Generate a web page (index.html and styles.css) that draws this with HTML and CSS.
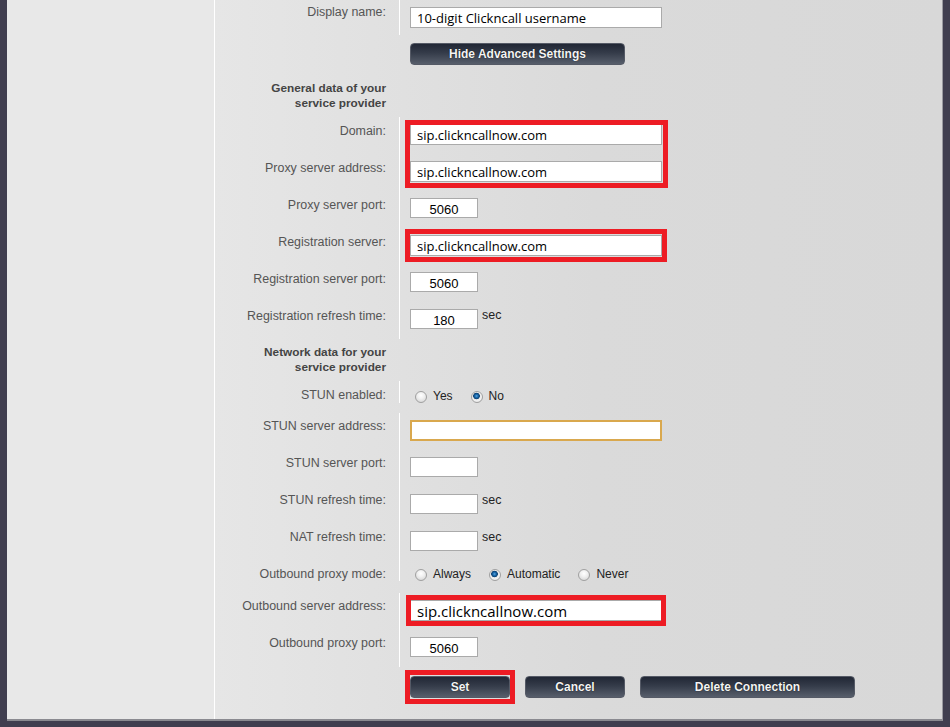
FILE: index.html
```html
<!DOCTYPE html>
<html>
<head>
<meta charset="utf-8">
<title>Advanced Settings</title>
<link rel="stylesheet" href="styles.css">
</head>
<body>
<div class="frame">
  <div class="side"></div>
  <div class="main">
    <div class="sect s1">
      <div class="row r35"><div class="lbl">Display name:</div><div class="fld"><input class="txt wide" value="10-digit Clickncall username"></div></div>
    </div>
    <div class="btnrow"><button class="btn adv">Hide Advanced Settings</button></div>
    <div class="heading">General data of your<br>service provider</div>
    <div class="sect s2">
      <div class="row"><div class="lbl">Domain:</div><div class="fld pair"><input class="txt wide" value="sip.clickncallnow.com"><span class="mark-pair"></span></div></div>
      <div class="row"><div class="lbl">Proxy server address:</div><div class="fld"><input class="txt wide" value="sip.clickncallnow.com"></div></div>
      <div class="row"><div class="lbl">Proxy server port:</div><div class="fld"><input class="txt small" value="5060"></div></div>
      <div class="row"><div class="lbl">Registration server:</div><div class="fld"><span class="mark"><input class="txt wide" value="sip.clickncallnow.com"></span></div></div>
      <div class="row"><div class="lbl">Registration server port:</div><div class="fld"><input class="txt small" value="5060"></div></div>
      <div class="row"><div class="lbl">Registration refresh time:</div><div class="fld"><input class="txt small" value="180"><span class="unit">sec</span></div></div>
    </div>
    <div class="heading h2">Network data for your<br>service provider</div>
    <div class="sect s3">
      <div class="row r32"><div class="lbl lr">STUN enabled:</div><div class="fld radios">
        <label class="opt"><input type="radio" name="stun" class="rad">Yes</label>
        <label class="opt"><input type="radio" name="stun" class="rad" checked>No</label>
      </div></div>
      <div class="row"><div class="lbl">STUN server address:</div><div class="fld"><input class="txt wide focus" value=""></div></div>
      <div class="row"><div class="lbl">STUN server port:</div><div class="fld"><input class="txt small" value=""></div></div>
      <div class="row"><div class="lbl">STUN refresh time:</div><div class="fld"><input class="txt small" value=""><span class="unit">sec</span></div></div>
      <div class="row"><div class="lbl">NAT refresh time:</div><div class="fld"><input class="txt small" value=""><span class="unit">sec</span></div></div>
      <div class="row r32"><div class="lbl lr lm">Outbound proxy mode:</div><div class="fld radios rm">
        <label class="opt"><input type="radio" name="obp" class="rad">Always</label>
        <label class="opt"><input type="radio" name="obp" class="rad" checked>Automatic</label>
        <label class="opt"><input type="radio" name="obp" class="rad">Never</label>
      </div></div>
      <div class="row"><div class="lbl">Outbound server address:</div><div class="fld"><span class="mark mark-ob"><input class="txt wide big" value="sip.clickncallnow.com"></span></div></div>
      <div class="row"><div class="lbl">Outbound proxy port:</div><div class="fld"><input class="txt small" value="5060"></div></div>
    </div>
    <div class="actions">
      <span class="mark mark-btn"><button class="btn set">Set</button></span>
      <button class="btn cancel">Cancel</button>
      <button class="btn del">Delete Connection</button>
    </div>
  </div>
</div>
</body>
</html>
```
FILE: styles.css
```css
html, body {
  margin: 0;
  padding: 0;
}
body {
  background: #403e4f;
  font-family: "Liberation Sans", Arial, sans-serif;
  font-size: 12px;
  width: 950px;
  height: 727px;
  overflow: hidden;
}
.frame {
  display: flex;
  margin: 0 7px 0 7px;
  height: 719px;
  border-bottom: 2px solid #8a8a90;
  border-right: 1px solid #9a9aa0;
}
.side {
  width: 207px;
  background: #e8e8e8;
  border-right: 1px solid #ffffff;
  flex: none;
}
.main {
  flex: 1;
  background: linear-gradient(to right, #e6e6e6 0, #dadada 380px, #d8d8d8 100%);
}
.sect {
  display: flex;
  flex-direction: column;
}
.row {
  display: grid;
  grid-template-columns: 184px 1fr;
  height: 37px;
}
.row.r35 { height: 35px; }
.row.r32 { height: 32px; }
.lbl {
  text-align: right;
  padding: 6px 13px 0 0;
  line-height: 14px;
  font-size: 12.45px;
  color: #555555;
  white-space: nowrap;
}
.s1 .lbl { padding-top: 5px; }
.s2 .lbl { padding-top: 7px; }
.lbl.lr { padding-top: 7px; }
.lbl.lm { padding-top: 6px; }
.fld {
  border-left: 1px solid #ffffff;
  padding: 7px 0 0 10px;
  display: flex;
  align-items: flex-start;
}
.fld.pair { position: relative; }
.txt {
  box-sizing: border-box;
  height: 21px;
  border: 1px solid #aaaaaa;
  background: #ffffff;
  margin: 0;
  padding: 0 6px;
  font-family: "Open Sans", "Noto Sans", sans-serif;
  font-size: 13px;
  color: #000000;
  outline: none;
}
.txt.wide { width: 252px; }
.txt.small {
  width: 68px;
  height: 20px;
  padding-top: 2px;
  text-align: center;
  font-family: "Liberation Sans", Arial, sans-serif;
  font-size: 13px;
}
.txt.big { font-size: 15px; padding-top: 1px; }
.txt.focus {
  border: 2px solid #d9a84e;
}
.unit {
  margin-left: 4px;
  line-height: 12px;
  font-size: 12.45px;
  color: #222222;
}
.mark {
  position: relative;
  display: inline-block;
  line-height: 0;
}
.mark::after {
  content: "";
  position: absolute;
  left: -5px;
  right: -5px;
  top: -6px;
  bottom: -6px;
  border: 5px solid #ed1c24;
  pointer-events: none;
}
.mark.mark-ob::after {
  top: -5px;
  bottom: -5px;
  left: -4px;
  right: -4px;
}
.mark-pair {
  position: absolute;
  left: 5px;
  top: 3px;
  width: 263px;
  height: 68px;
  box-sizing: border-box;
  border: 5px solid #ed1c24;
  pointer-events: none;
}
.radios {
  align-items: center;
  height: 14px;
  padding-top: 8px;
}
.radios.rm { padding-top: 6px; }
.opt {
  display: inline-flex;
  align-items: center;
  color: #222222;
  margin-right: 13px;
  line-height: 14px;
  font-size: 12px;
}
.rad {
  -webkit-appearance: none;
  appearance: none;
  box-sizing: border-box;
  width: 12px;
  height: 12px;
  margin: 2px 6px 0 5px;
  border-radius: 50%;
  border: 1px solid #a0a0a0;
  background: radial-gradient(circle at 50% 35%, #ffffff 0, #f0f0f0 40%, #cfcfcf 100%);
}
.rad:checked {
  background:
    radial-gradient(circle at 45% 40%, #5fa6de 0, #1a6cb0 1.5px, #0c3f70 3px, #e8e8e8 3.6px, #f2f2f2 5px, #cfcfcf 100%);
}
.btnrow {
  padding: 8px 0 0 195px;
  height: 22px;
}
.btn {
  box-sizing: border-box;
  height: 22px;
  margin: 0;
  padding: 0;
  border: 1px solid #555a66;
  border-radius: 4px;
  background: linear-gradient(to bottom, #212735 0%, #353c4a 45%, #575e6b 100%);
  color: #f4f4f4;
  font-family: "Liberation Sans", Arial, sans-serif;
  font-weight: bold;
  font-size: 12px;
  text-shadow: 0 0 1px #000;
  display: block;
}
.btn.adv { width: 215px; }
.heading {
  box-sizing: border-box;
  width: 184px;
  padding: 16px 13px 6px 0;
  text-align: right;
  font-weight: bold;
  font-size: 11.8px;
  line-height: 15px;
  color: #444444;
  height: 52px;
}
.heading.h2 {
  padding-top: 6px;
  height: 42px;
}
.actions {
  display: flex;
  gap: 15px;
  padding: 9px 0 0 195px;
}
.btn.set, .btn.cancel { width: 100px; }
.btn.del { width: 215px; }
.mark.mark-btn::after {
  top: -6px;
  bottom: -6px;
}
```
